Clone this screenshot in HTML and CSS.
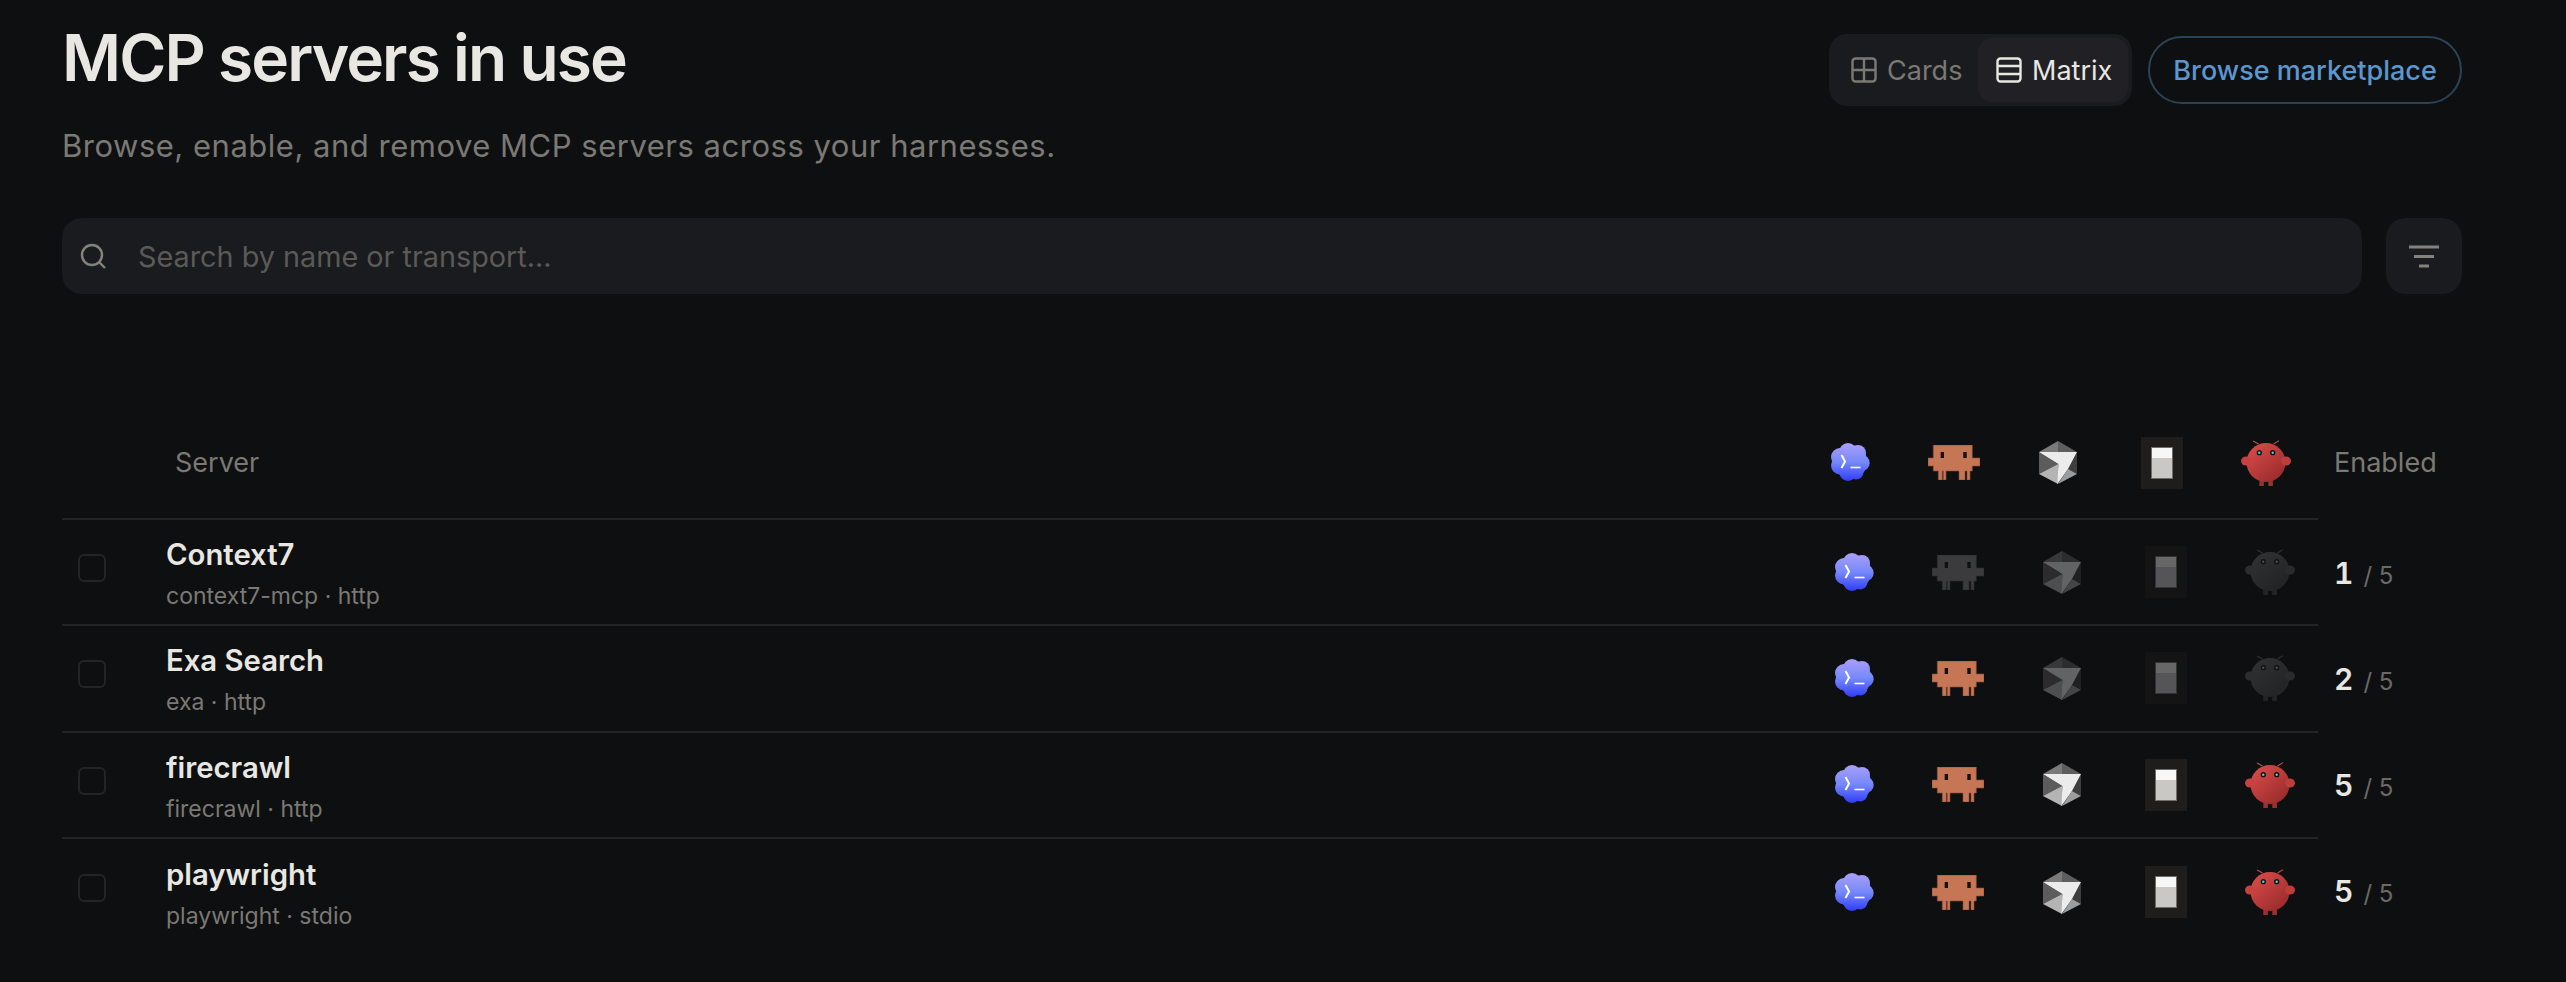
FILE: index.html
```html
<!DOCTYPE html>
<html lang="en">
<head>
<meta charset="utf-8">
<title>MCP servers in use</title>
<link rel="stylesheet" href="styles.css">
</head>
<body>
<svg class="sprite" aria-hidden="true">
  <defs>
    <linearGradient id="blue" gradientUnits="userSpaceOnUse" x1="19" y1="0" x2="19" y2="39">
      <stop offset="0" stop-color="#ab9ff8"/><stop offset=".5" stop-color="#7488fb"/><stop offset="1" stop-color="#2c38f4"/>
    </linearGradient>
    <linearGradient id="red" gradientUnits="userSpaceOnUse" x1="10" y1="8" x2="38" y2="40">
      <stop offset="0" stop-color="#d54a48"/><stop offset="1" stop-color="#992b2b"/>
    </linearGradient>
    <symbol id="i-blue" viewBox="0 0 39 39">
      <g fill="url(#blue)">
        <circle cx="19.5" cy="19" r="16.8"/><circle cx="17" cy="9" r="9"/><circle cx="27" cy="10" r="8"/><circle cx="30.5" cy="20" r="8.2"/><circle cx="25" cy="29" r="7.5"/><circle cx="17" cy="29.5" r="8.5"/><circle cx="9" cy="22.5" r="9"/><circle cx="9" cy="14" r="9"/>
      </g>
      <path d="M10.5 12 14 18.5 10.5 25" fill="none" stroke="#fff" stroke-width="2"/>
      <path d="M19.5 24.5H29.5" stroke="#fff" stroke-width="1.6"/>
    </symbol>
    <symbol id="i-crab" viewBox="0 0 52 35">
      <g fill="#c67555" stroke="#8a4f3a" stroke-width=".6">
        <path d="M5.3 0H44.3V13H52V21H44.3V26H42V35H39V26H37V35H31V26H18V35H15.3V26H14.3V35H10.3V26H5.3V21H0V13H5.3Z"/>
      </g>
      <path d="M12.7 7H16V13H12.7ZM35.3 7H38.7V13H35.3Z" fill="#121010"/>
    </symbol>
    <symbol id="i-cube" viewBox="0 0 38 43">
      <path d="M0 11 19 0V11Z" fill="#7a7a7a"/>
      <path d="M19 0 38 11H19Z" fill="#5e5e5e"/>
      <path d="M0 11V33L19 23Z" fill="#5c5c5c"/>
      <path d="M0 33 19 23V43Z" fill="#b4b4b4"/>
      <path d="M38 11V33L29 28Z" fill="#3e3e3e"/>
      <path d="M19 43 29 28 38 33Z" fill="#9c9c9c"/>
      <path d="M0 11H38L29 28 18.5 43 19.3 23Z" fill="#ececec"/>
    </symbol>
    <symbol id="i-doc" viewBox="0 0 42 52">
      <rect width="42" height="52" fill="#1f1c1c"/>
      <rect x="10.5" y="10.5" width="21" height="31" fill="#c9c8c5" stroke="#6e6d6b"/>
      <rect x="11" y="11" width="20" height="10" fill="#f7f7f7"/>
    </symbol>
    <symbol id="i-red" viewBox="0 0 50 46">
      <path d="M12 1 17.5 4M38 .6 32.5 4" fill="none" stroke="#cf4a48" stroke-width="1.1"/>
      <rect x="18.3" y="38" width="4.6" height="8" fill="#9c2f2f"/>
      <rect x="27.3" y="38" width="4.6" height="8" fill="#9c2f2f"/>
      <circle cx="25" cy="22.5" r="19.5" fill="url(#red)"/>
      <ellipse cx="5" cy="21" rx="5" ry="4.6" fill="#c64241"/>
      <ellipse cx="45" cy="21" rx="5" ry="4.6" fill="#bd3d3d"/>
      <circle cx="18.3" cy="12.7" r="2.6" fill="#111"/><circle cx="31.7" cy="12.7" r="2.6" fill="#111"/>
      <circle cx="18.3" cy="12.7" r="1.2" fill="#3fd6d0"/><circle cx="31.7" cy="12.7" r="1.2" fill="#3fd6d0"/>
    </symbol>
  </defs>
</svg>

<main class="page">
  <header class="top">
    <div>
      <h1 class="title">MCP servers in use</h1>
      <p class="subtitle">Browse, enable, and remove MCP servers across your harnesses.</p>
    </div>
    <div class="actions">
      <div class="segmented">
        <button class="seg">
          <svg class="seg-icon" viewBox="0 0 26 26"><rect x="1.5" y="1.5" width="23" height="23" rx="3"/><path d="M13 1.5V24.5M1.5 13H24.5"/></svg>
          Cards
        </button>
        <button class="seg seg-active">
          <svg class="seg-icon" viewBox="0 0 26 26"><rect x="1.5" y="1.5" width="23" height="23" rx="3"/><path d="M1.5 9H24.5M1.5 17H24.5"/></svg>
          Matrix
        </button>
      </div>
      <button class="market">Browse marketplace</button>
    </div>
  </header>

  <div class="toolbar">
    <div class="search">
      <svg class="search-icon" viewBox="0 0 26 26"><circle cx="12" cy="12" r="10"/><path d="M19 19 25 25"/></svg>
      <span class="placeholder">Search by name or transport...</span>
    </div>
    <button class="filter">
      <svg class="filter-icon" viewBox="0 0 30 23"><path d="M0 2H30M5 11.5H25M10 21H20"/></svg>
    </button>
  </div>

  <section class="matrix">
    <div class="head">
      <div class="head-main">
        <span class="head-server">Server</span>
        <div class="cells">
          <svg class="ic ic-blue"><use href="#i-blue"/></svg>
          <svg class="ic ic-crab"><use href="#i-crab"/></svg>
          <svg class="ic ic-cube"><use href="#i-cube"/></svg>
          <svg class="ic ic-doc"><use href="#i-doc"/></svg>
          <svg class="ic ic-red"><use href="#i-red"/></svg>
        </div>
      </div>
      <span class="head-enabled">Enabled</span>
    </div>

    <div class="row">
      <div class="row-main">
        <span class="check"></span>
        <div class="info"><div class="name">Context7</div><div class="meta">context7-mcp · http</div></div>
        <div class="cells">
          <svg class="ic ic-blue"><use href="#i-blue"/></svg>
          <svg class="ic ic-crab off"><use href="#i-crab"/></svg>
          <svg class="ic ic-cube off"><use href="#i-cube"/></svg>
          <svg class="ic ic-doc off"><use href="#i-doc"/></svg>
          <svg class="ic ic-red off"><use href="#i-red"/></svg>
        </div>
      </div>
      <div class="count"><b>1</b><span>/ 5</span></div>
    </div>

    <div class="row">
      <div class="row-main">
        <span class="check"></span>
        <div class="info"><div class="name">Exa Search</div><div class="meta">exa · http</div></div>
        <div class="cells">
          <svg class="ic ic-blue"><use href="#i-blue"/></svg>
          <svg class="ic ic-crab"><use href="#i-crab"/></svg>
          <svg class="ic ic-cube off"><use href="#i-cube"/></svg>
          <svg class="ic ic-doc off"><use href="#i-doc"/></svg>
          <svg class="ic ic-red off"><use href="#i-red"/></svg>
        </div>
      </div>
      <div class="count"><b>2</b><span>/ 5</span></div>
    </div>

    <div class="row">
      <div class="row-main">
        <span class="check"></span>
        <div class="info"><div class="name">firecrawl</div><div class="meta">firecrawl · http</div></div>
        <div class="cells">
          <svg class="ic ic-blue"><use href="#i-blue"/></svg>
          <svg class="ic ic-crab"><use href="#i-crab"/></svg>
          <svg class="ic ic-cube"><use href="#i-cube"/></svg>
          <svg class="ic ic-doc"><use href="#i-doc"/></svg>
          <svg class="ic ic-red"><use href="#i-red"/></svg>
        </div>
      </div>
      <div class="count"><b>5</b><span>/ 5</span></div>
    </div>

    <div class="row">
      <div class="row-main">
        <span class="check"></span>
        <div class="info"><div class="name">playwright</div><div class="meta">playwright · stdio</div></div>
        <div class="cells">
          <svg class="ic ic-blue"><use href="#i-blue"/></svg>
          <svg class="ic ic-crab"><use href="#i-crab"/></svg>
          <svg class="ic ic-cube"><use href="#i-cube"/></svg>
          <svg class="ic ic-doc"><use href="#i-doc"/></svg>
          <svg class="ic ic-red"><use href="#i-red"/></svg>
        </div>
      </div>
      <div class="count"><b>5</b><span>/ 5</span></div>
    </div>
  </section>
</main>
</body>
</html>
```
FILE: styles.css
```css
* { box-sizing: border-box; }
html, body { margin: 0; height: 100%; }
body {
  background: #0e0f11;
  color: #e8e7e2;
  font-family: Inter, "Liberation Sans", sans-serif;
  overflow: hidden;
}
button { font: inherit; border: 0; background: none; color: inherit; padding: 0; }
.sprite { display: block; width: 0; height: 0; }

.page { margin-left: 62px; width: 2400px; padding-top: 22px; }

.top { display: flex; justify-content: space-between; align-items: flex-start; height: 196px; }
.title { margin: 0; font-size: 64px; line-height: 72px; font-weight: 600; letter-spacing: -1.9px; color: #e8e7e2; }
.subtitle { margin: 30px 0 0; font-size: 31px; line-height: 44px; color: #7b7973; letter-spacing: .51px; }

.actions { display: flex; align-items: center; gap: 16px; padding-top: 12px; }
.segmented { display: flex; padding: 4px; background: #1a1b1e; border-radius: 18px; height: 72px; width: 303px; justify-content: space-between; }
.seg { display: flex; align-items: center; gap: 10px; padding: 0 8px 0 18px; border-radius: 14px; font-size: 27px; color: #7b7973; }
.seg-active { background: #212125; color: #e8e7e2; padding: 0 12px 0 18px; width: 150px; flex: none; }
.seg-icon { width: 26px; height: 26px; fill: none; stroke: currentColor; stroke-width: 2.4; flex: none; }
.market { height: 68px; width: 314px; border: 2px solid #2b4358; border-radius: 34px; color: #5b97cf; font-size: 27px; font-weight: 500; }

.toolbar { display: flex; gap: 24px; }
.search { flex: 1; height: 76px; background: #1a1b1e; border-radius: 20px; display: flex; align-items: center; gap: 32px; padding-left: 18px; }
.search-icon { width: 26px; height: 26px; fill: none; stroke: #85827b; stroke-width: 2.4; flex: none; }
.placeholder { font-size: 28.8px; color: #5b5a56; }
.filter { width: 76px; height: 76px; background: #1a1b1e; border-radius: 20px; display: flex; align-items: center; justify-content: center; }
.filter-icon { width: 30px; height: 23px; fill: none; stroke: #85827b; stroke-width: 3; }

.matrix { margin-top: 113px; }
.head { display: flex; height: 113px; }
.head-main { width: 2256px; flex: none; display: flex; align-items: center; border-bottom: 2px solid #232426; padding-left: 113px; }
.head-server { flex: 1; font-size: 27px; color: #7b7973; }
.head-enabled { font-size: 27px; color: #7b7973; padding: 0 0 2px 16px; align-self: center; }

.row { display: flex; height: 106.3px; }
.row-main { width: 2256px; flex: none; display: flex; align-items: center; padding-left: 16px; border-bottom: 2px solid #232426; }
.row:last-child .row-main { border-bottom: 0; }
.check { width: 28px; height: 28px; flex: none; border: 2px solid #232426; border-radius: 6px; margin: 0 60px 8px 0; }
.info { flex: 1; padding-top: 4px; }
.name { font-size: 29.3px; line-height: 40px; font-weight: 600; color: #e8e7e2; }
.meta { font-size: 23px; line-height: 34px; margin-top: 4px; color: #7b7973; }

.cells { display: grid; grid-template-columns: repeat(5, 104px); justify-items: center; align-items: center; flex: none; }
.row-main .cells { margin-right: -4px; }
.ic { display: block; }
.ic-blue { width: 39px; height: 39px; }
.ic-crab { width: 52px; height: 35px; }
.ic-cube { width: 38px; height: 43px; }
.ic-doc { width: 42px; height: 52px; }
.ic-red { width: 50px; height: 46px; }
.off { filter: grayscale(1) opacity(.38); }

.count { display: flex; align-items: baseline; gap: 10px; padding: 34.5px 0 0 16px; }
.count b { font-size: 30px; font-weight: 600; color: #e8e7e2; font-variant-numeric: tabular-nums; }
.count span { font-size: 24px; color: #6b6965; }
```
